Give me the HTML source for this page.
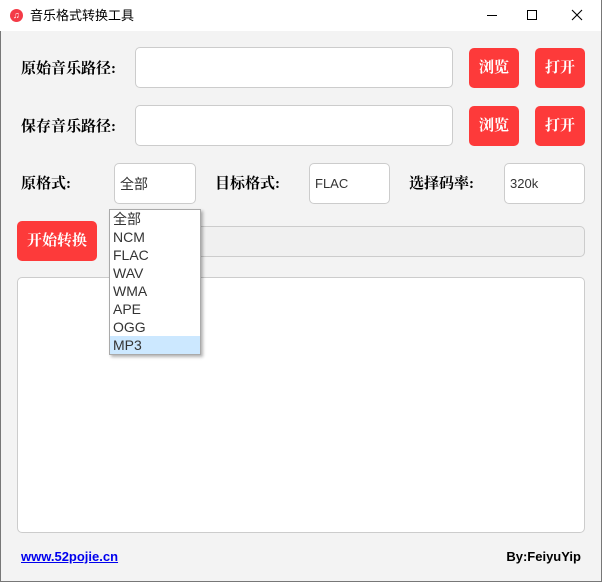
<!DOCTYPE html>
<html><head><meta charset="utf-8"><style>
*{margin:0;padding:0;box-sizing:border-box}
body{width:602px;height:582px;background:#f3f3f3;position:relative;overflow:hidden;font-family:"Liberation Sans","Noto Sans CJK SC",sans-serif}
.a{position:absolute}
.tb{left:0;top:0;width:602px;height:31px;background:#fff}
.lbl{font-family:"Liberation Serif","Noto Serif CJK SC",serif;font-weight:bold;font-size:15px;color:#000;line-height:20px}
.inp{background:#fff;border:1px solid #ccc;border-radius:5px}
.btn{background:#fd3a3a;border-radius:5px;color:#fff;font-family:"Liberation Serif","Noto Serif CJK SC",serif;font-weight:bold;font-size:15px;text-align:center}
.val{font-size:14px;color:#333;padding-left:5px}
.dd{left:109px;top:209px;width:92px;height:146px;background:#fff;border:1px solid #aaa;box-shadow:2px 2px 3px rgba(0,0,0,.3)}
.dd div{height:18px;line-height:18px;font-size:14px;color:#333;padding-left:3px}
</style></head><body>
<div class="a tb"></div>
<div class="a" style="left:10px;top:9px;width:13px;height:13px;border-radius:50%;background:#f43b47"></div>
<div class="a" style="left:13px;top:9px;color:#fff;font-size:9px;line-height:13px">♫</div>
<div class="a" style="left:30px;top:7px;font-size:13px;line-height:17px;color:#000">音乐格式转换工具</div>
<div class="a" style="left:487px;top:15px;width:10px;height:1px;background:#000"></div>
<div class="a" style="left:527px;top:10px;width:10px;height:10px;border:1px solid #000"></div>
<svg class="a" style="left:571px;top:9px" width="12" height="12"><path d="M1 1L11 11M11 1L1 11" stroke="#000" stroke-width="1.1"/></svg>

<div class="a lbl" style="left:21px;top:59px">原始音乐路径:</div>
<div class="a inp" style="left:135px;top:47px;width:318px;height:41px"></div>
<div class="a btn" style="left:469px;top:48px;width:50px;height:40px;line-height:40px">浏览</div>
<div class="a btn" style="left:535px;top:48px;width:50px;height:40px;line-height:40px">打开</div>

<div class="a lbl" style="left:21px;top:117px">保存音乐路径:</div>
<div class="a inp" style="left:135px;top:105px;width:318px;height:41px"></div>
<div class="a btn" style="left:469px;top:106px;width:50px;height:40px;line-height:40px">浏览</div>
<div class="a btn" style="left:535px;top:106px;width:50px;height:40px;line-height:40px">打开</div>

<div class="a lbl" style="left:21px;top:174px">原格式:</div>
<div class="a inp val" style="left:114px;top:163px;width:82px;height:41px;line-height:40px">全部</div>
<div class="a lbl" style="left:215px;top:174px">目标格式:</div>
<div class="a inp val" style="left:309px;top:163px;width:81px;height:41px;line-height:40px;font-size:13px">FLAC</div>
<div class="a lbl" style="left:409px;top:174px">选择码率:</div>
<div class="a inp val" style="left:504px;top:163px;width:81px;height:41px;line-height:40px;font-size:13px">320k</div>

<div class="a btn" style="left:17px;top:221px;width:80px;height:40px;line-height:40px">开始转换</div>
<div class="a" style="left:110px;top:226px;width:475px;height:31px;background:#f0f0f0;border:1px solid #ccc;border-radius:5px"></div>
<div class="a inp" style="left:17px;top:277px;width:568px;height:256px"></div>

<div class="a dd">
<div>全部</div><div>NCM</div><div>FLAC</div><div>WAV</div><div>WMA</div><div>APE</div><div>OGG</div><div style="background:#cce8ff">MP3</div>
</div>

<div class="a" style="left:21px;top:549px;font-size:13px;font-weight:bold;color:#00e;text-decoration:underline;line-height:16px">www.52pojie.cn</div>
<div class="a" style="right:21px;top:549px;font-size:13px;font-weight:bold;color:#000;line-height:16px">By:FeiyuYip</div>

<div class="a" style="left:0;top:31px;width:1px;height:551px;background:#777"></div>
<div class="a" style="right:0;top:0;width:1px;height:582px;background:#777"></div>
<div class="a" style="left:0;bottom:0;width:602px;height:1px;background:#777"></div>
</body></html>
